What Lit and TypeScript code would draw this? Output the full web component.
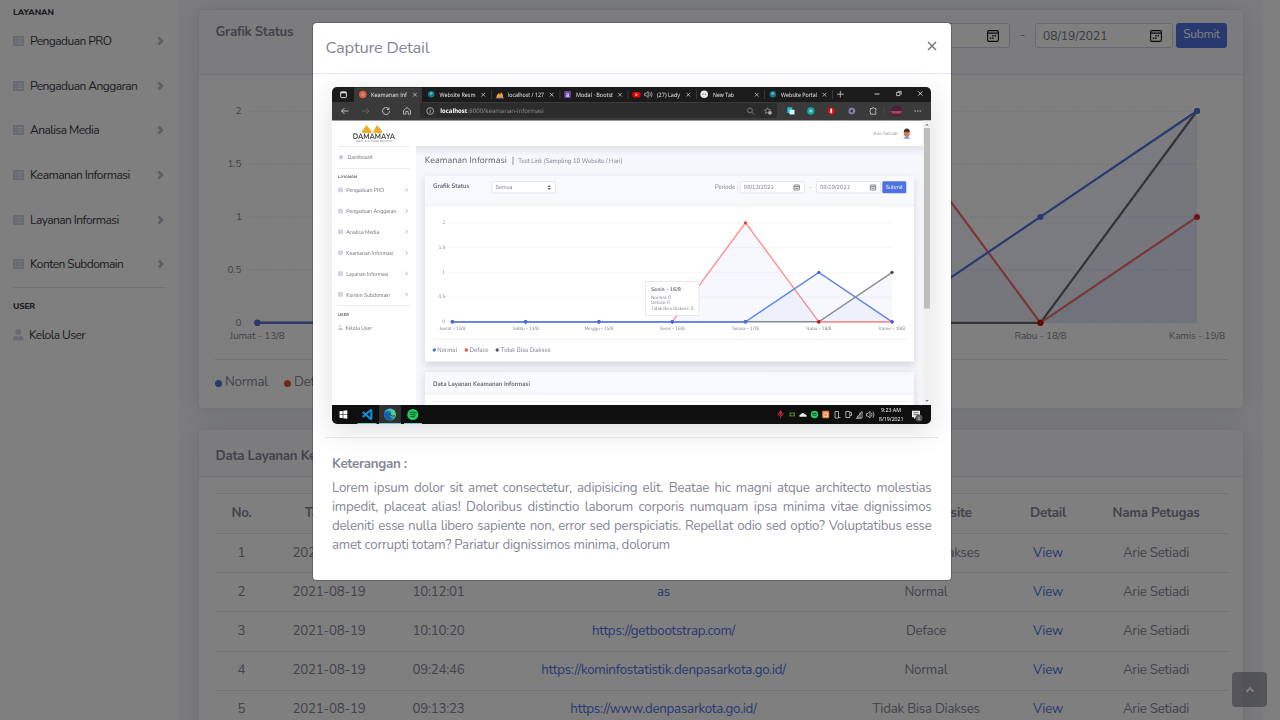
import { LitElement, html, svg, css } from "lit";
import { customElement } from "lit/decorators.js";

const listIcon = html`<svg width="11" height="10" viewBox="0 0 11 10">
  <rect x="0" y="0" width="11" height="10" rx="1" fill="#d1d3e2" />
  <path d="M2 2.500h1.200M2 5h1.200M2 7.500h1.200M4.200 2.500h5M4.200 5h5M4.200 7.500h5" stroke="#fff" stroke-width=".9" opacity=".8" />
</svg>`;

const chevron = html`<svg width="8" height="10" viewBox="0 0 8 10">
  <path d="M1.500 1.500L5 5L1.500 8.500" fill="none" stroke="#b7b9cc" stroke-width="2.500" />
</svg>`;

const calendar = html`<svg width="12" height="12" viewBox="0 0 12 12">
  <rect x="0.600" y="0.600" width="10.800" height="10.800" rx="1.400" fill="none" stroke="#111" stroke-width="1.100" />
  <path d="M0.600 3.100h10.800" stroke="#111" stroke-width="1.100" />
  <path d="M5.200 5.800h1.400M7.600 5.800h1.400M2.800 8.200h1.400M5.200 8.200h1.400" stroke="#111" stroke-width="1.400" />
</svg>`;

@customElement("side-nav")
class SideNav extends LitElement {
  static styles = css`
    :host { display: flex; flex-direction: column; width: 179px; flex: none; background: #fff; padding: 5px 14px 0 13px; box-sizing: border-box; }
    .head { font-size: 8.6px; line-height: 14px; height: 14px; font-weight: 800; color: #3a3b45; }
    .layanan { letter-spacing: -0.1px; }
    .items { display: grid; grid-auto-rows: 44.6px; padding-bottom: 0.6px; }
    .item { display: flex; align-items: center; font-size: 12px; color: #3a3b45; letter-spacing: -0.56px; }
    .item span { flex: 1; padding-left: 6px; }
    .user span { padding-left: 5px; }
    hr { border: 0; border-top: 1px solid #e3e6f0; margin: 0 0 11px; width: 153px; }
    .item svg { display: block; }
    .user { height: 44px; }
  `;
  render() {
    return html`<div class="head layanan">LAYANAN</div>
      <div class="items">
        ${["Pengaduan PRO", "Pengaduan Anggaran", "Analisa Media", "Keamanan Informasi", "Layanan Informasi", "Konten Subdomain"].map(
          (t) => html`<div class="item">${listIcon}<span>${t}</span>${chevron}</div>`
        )}
      </div>
      <hr />
      <div class="head">USER</div>
      <div class="item user">
        <svg width="11" height="12" viewBox="0 0 11 12"><circle cx="5.200" cy="3" r="3" fill="#d1d3e2" /><path d="M0 11.500V9.600C0 7.500 1.200 6.800 3 6.700L5.200 8L7.400 6.700C9.200 6.800 10.400 7.500 10.400 9.600V11.500Z" fill="#d1d3e2" /><path d="M5.200 7.200v4" stroke="#fff" stroke-width=".8" opacity=".6" /></svg>
        <span>Kelola User</span>
      </div>`;
  }
}

@customElement("status-chart")
class StatusChart extends LitElement {
  static styles = css`
    :host { display: block; height: 284px; }
    svg { display: block; }
    text { font: 10px Nunito, Lato, sans-serif; fill: #858796; letter-spacing: 0; }
  `;
  render() {
    const x = (i: number) => 257.3 + i * 156.62;
    const y = (v: number) => 322.8 - v * 105.9;
    const series = [
      { c: "#666", dot: "#5a5c69", v: [0, 0, 0, 0, 0, 0, 2] },
      { c: "#ff6b6b", dot: "#e32525", v: [0, 0, 0, 0, 2, 0, 1] },
      { c: "#4e73df", dot: "#4e73df", v: [0, 0, 0, 0, 0, 1, 2] },
    ];
    const labels: [number, string, number][] = [[0, "Jumat - 13/8", 55], [5, "Rabu - 18/8", 52], [6, "Kamis - 19/8", 56]];
    const ticks: [number, number][] = [[2, 6], [1.5, 14], [1, 5.5], [0.5, 14], [0, 6]];
    return html`<svg width="1044" height="284" viewBox="199 75 1044 284">
      ${ticks.map(
        ([v, w]) => svg`<line x1="249" x2="1197" y1=${y(v) + 0.2} y2=${y(v) + 0.2} stroke="#e3e6f0" stroke-width="1" stroke-dasharray="2 1.500"/>
        <text x=${241.5 - w} y=${y(v) + 2.7} textLength=${w}>${v}</text>`
      )}
      ${series.map((s) => {
        const pts = s.v.map((v, i) => `${x(i)},${y(v)}`).join(" ");
        return svg`<polygon points="${x(0)},${y(0)} ${pts} ${x(6)},${y(0)}" fill="#4e73df" fill-opacity=".06"/>
          <polyline points=${pts} fill="none" stroke=${s.c} stroke-width="2.200"/>
          ${s.v.map((v, i) => svg`<circle cx=${x(i)} cy=${y(v)} r="3" fill=${s.dot}/>`)}`;
      })}
      <circle cx=${x(5)} cy=${y(0)} r="3" fill="#c81111" />
      ${labels.map(([i, t, w]) => svg`<text x=${x(i) - w / 2} y="339" textLength=${w}>${t}</text>`)}
    </svg>`;
  }
}

@customElement("site-table")
class SiteTable extends LitElement {
  static styles = css`
    :host { display: block; padding: 16px 16px 0; font-size: 13.33px; letter-spacing: -0.245px; }
    .row { display: grid; grid-template-columns: 53px 122px 97px 353px 172px 72px 144px; height: 39.2px; padding-bottom: 0.8px; box-sizing: border-box; border-top: 1px solid #e3e6f0; align-items: center; text-align: center; width: 1013px; }
    .th { height: 40px; font-weight: 700; padding-bottom: 1.5px; }
    .link { color: #4e73df; }
  `;
  render() {
    const rows = [
      ["1", "2021-08-19", "", "", "Tidak Bisa Diakses"],
      ["2", "2021-08-19", "10:12:01", "as", "Normal"],
      ["3", "2021-08-19", "10:10:20", "https://getbootstrap.com/", "Deface"],
      ["4", "2021-08-19", "09:24:46", "https://kominfostatistik.denpasarkota.go.id/", "Normal"],
      ["5", "2021-08-19", "09:13:23", "https://www.denpasarkota.go.id/", "Tidak Bisa Diakses"],
    ];
    return html`<div class="row th">
        ${["No.", "Tanggal", "", "", "Status Website", "Detail", "Nama Petugas"].map((t) => html`<span>${t}</span>`)}
      </div>
      ${rows.map(
        (r) => html`<div class="row">
          ${r.map((t, i) => html`<span class=${i === 3 ? "link" : ""}>${t}</span>`)}
          <span class="link">View</span><span>Arie Setiadi</span>
        </div>`
      )}`;
  }
}

@customElement("capture-shot")
class CaptureShot extends LitElement {
  static styles = css`
    :host { display: block; height: 337px; border-radius: 5px; overflow: hidden; box-shadow: 0 7px 28px rgba(58, 59, 69, 0.16); letter-spacing: 0; }
    svg { display: block; }
    .soft { filter: blur(0.3px); }
    text { font-family: Nunito, Lato, sans-serif; fill: #858796; text-rendering: geometricPrecision; }
    .ui { font-family: "Open Sans", sans-serif; }
  `;
  t(x: number, y: number, w: number, size: number, s: string, fill = "#7b7d8c", weight = 400, cls = "") {
    return svg`<text class=${cls} x=${x} y=${y} textLength=${w} lengthAdjust="spacingAndGlyphs" font-size=${size} font-weight=${weight} style="fill:${fill}">${s}</text>`;
  }
  render() {
    const t = this.t;
    const x = (i: number) => 452.4 + i * 73.28;
    const y = (v: number) => 321.8 - v * 49.5;
    const tabs: [number, number, string, number][] = [
      [371, 36, "Keamanan Inf", 415], [439.5, 36, "Website Resm", 483.3], [508, 36, "localhost / 127", 551.7],
      [576, 37, "Modal · Bootst", 620], [657, 23, "(27) Lady", 688.3], [713, 21, "New Tab", 756.7], [781, 36, "Website Portal", 824.5],
    ];
    const series = [
      { c: "#8c8c8c", d: "#444", v: [0, 0, 0, 0, 0, 0, 1] },
      { c: "#ff9090", d: "#f0383c", v: [0, 0, 0, 0, 2, 0, 0] },
      { c: "#6583e4", d: "#4468dc", v: [0, 0, 0, 0, 0, 1, 0] },
    ];
    const menu: [string, number, number][] = [
      ["Pengaduan PRO", 192, 38], ["Pengaduan Anggaran", 213.2, 50], ["Analisa Media", 233.8, 33],
      ["Keamanan Informasi", 254.8, 47], ["Layanan Informasi", 275.7, 42], ["Konten Subdomain", 296.5, 44],
    ];
    const axis: [string, number][] = [["Jumat - 13/8", 26], ["Sabtu - 14/8", 26], ["Minggu - 15/8", 29], ["Senin - 16/8", 25], ["Selasa - 17/8", 27], ["Rabu - 18/8", 25], ["Kamis - 19/8", 26]];
    return html`<svg width="599" height="337" viewBox="332 87 599 337">
      <defs>
        <linearGradient id="top" x1="0" y1="0" x2="0" y2="1"><stop offset="0" stop-color="#e3e4ea" /><stop offset="1" stop-color="#f7f8fc" /></linearGradient>
        <linearGradient id="edge"><stop offset="0" stop-color="#2f9df0" /><stop offset="1" stop-color="#52d97b" /></linearGradient>
        <filter id="shade" x="-10%" y="-10%" width="120%" height="130%"><feGaussianBlur stdDeviation="4" /></filter>
      </defs>
      <rect x="332" y="87" width="599" height="337" fill="#fff" />
      <rect x="416" y="146" width="507" height="260" fill="#f6f7fb" />
      <rect x="416" y="146" width="507" height="10" fill="url(#top)" />
      <rect x="425" y="179" width="489" height="187" fill="#777a88" opacity=".25" filter="url(#shade)" />
      <rect x="425" y="374" width="489" height="40" fill="#777a88" opacity=".25" filter="url(#shade)" />
      <rect x="332" y="87" width="599" height="17" fill="#1b1b1b" />
      <rect x="332" y="405" width="599" height="19" fill="#0f0f0f" />

      <g class="soft">
      <rect x="354" y="87.500" width="68" height="17" fill="#3a3a3a" />
      <rect x="330" y="102" width="603" height="18.500" fill="#3a3a3a" />
      <rect x="420" y="103" width="357" height="15" rx="2" fill="#2c2c2c" />
      <rect x="340.700" y="92" width="5.600" height="5.600" rx=".8" fill="none" stroke="#ddd" /><path d="M340.500 92.500h6" stroke="#ddd" stroke-width="1.600" />
      ${tabs.map(([tx, w, s, cx]) => svg`${t(tx, 96.7, w, 6, s, "#eee", 400, "ui")}<path d="M${cx - 1.8} 92.900l3.600 3.600m0-3.600l-3.600 3.600" stroke="#c8c8c8" stroke-width=".8"/>`)}
      ${[491.5, 560, 628, 696.5, 764.5, 832.5].map((v) => svg`<path d="M${v} 90v9" stroke="#444" stroke-width=".7"/>`)}
      <circle cx="362.800" cy="94.500" r="3.700" fill="#e75a4b" /><circle cx="362.800" cy="94.500" r="1.600" fill="#a9a366" />
      <circle cx="431.200" cy="94.300" r="3.200" fill="#18788a" /><circle cx="431.200" cy="93.600" r="1.400" fill="#4fc0c4" />
      <path d="M496 98l1-3 2-2 1 2 1-3 2 3v3z" fill="#f0a030" /><path d="M496 98h8" stroke="#6c78b0" stroke-width="1" />
      <rect x="564.300" y="91" width="6.600" height="7" rx="1" fill="#6b4aa5" />${t(566.2, 96.6, 3, 5, "B", "#fff", 700)}
      <rect x="632.500" y="92" width="8" height="5.400" rx="1.400" fill="#e00" /><path d="M635.600 93.300v2.800l2.300-1.400z" fill="#fff" />
      <path d="M644.700 93.300h1.500l2-1.800v6l-2-1.800h-1.500zM649.700 92.800q1.200 1.700 0 3.400M651.200 91.800q1.800 2.600 0 5.400" fill="none" stroke="#ccc" stroke-width=".7" />
      <circle cx="704.200" cy="94.300" r="3.800" fill="#eee" /><circle cx="703" cy="94.300" r=".7" fill="#777" /><circle cx="705.400" cy="94.300" r=".7" fill="#777" />
      <circle cx="772.800" cy="94.300" r="3.200" fill="#18788a" /><circle cx="772.800" cy="93.600" r="1.400" fill="#4fc0c4" />
      <path d="M840.300 90.800v6.800M837 94.200h6.800" stroke="#ccc" stroke-width=".8" />
      <path d="M874.500 94h5M918.200 91.400l4.200 4.200m0-4.200l-4.200 4.200" stroke="#ddd" stroke-width=".9" /><path d="M896.700 92.400h3.200v3.200h-3.200zM897.800 91.300h3.400v3.400" fill="none" stroke="#ddd" stroke-width=".8" />
      <path d="M348.500 111h-7m3-3l-3 3l3 3" fill="none" stroke="#ccc" stroke-width=".9" />
      <path d="M362 111h7m-3-3l3 3l-3 3" fill="none" stroke="#696969" stroke-width=".9" />
      <path d="M388.500 108.600A3.500 3.500 0 1 0 389.500 111M389 107.500v2h-2" fill="none" stroke="#ccc" stroke-width=".9" />
      <path d="M403.500 110.500l3.500-3l3.500 3v3.700h-2.300v-2.700h-2.400v2.700h-2.300z" fill="none" stroke="#ccc" stroke-width=".8" />
      <circle cx="430.200" cy="111" r="3.400" fill="none" stroke="#bbb" stroke-width=".8" /><path d="M430.200 110.300v2.600M430.200 108.800v.8" stroke="#bbb" stroke-width=".8" />
      ${t(440.3, 113.2, 27, 6.2, "localhost", "#fff", 700, "ui")}${t(467.7, 113.2, 76, 6.2, ":8000/keamanan-informasi", "#929292", 400, "ui")}
      <circle cx="750" cy="110.400" r="2.400" fill="none" stroke="#777" /><path d="M752 112.400l2.300 2.200" stroke="#777" />
      <path d="M764.500 109.800h2l1-2 1 2h2.200l-1.600 1.500.4 2.200-2-1-2 1 .4-2.300z" fill="none" stroke="#999" stroke-width=".8" /><circle cx="770" cy="112.800" r="1.900" fill="#aaa" />
      <rect x="787.300" y="107.400" width="5" height="5.600" fill="#1cc3dc" /><rect x="789.500" y="109.800" width="5" height="4.600" fill="#d8f7fb" />
      <circle cx="810.800" cy="111" r="3.700" fill="#13a9a5" /><circle cx="810.800" cy="111" r="1.500" fill="#7ddbd6" />
      <circle cx="831.200" cy="111" r="3.600" fill="#e00a0a" /><path d="M831.200 108.700v4.400" stroke="#fff" stroke-width="1.800" />
      <circle cx="851.800" cy="111" r="2.400" fill="none" stroke="#9290cf" stroke-width="2" stroke-dasharray="1.300 .3" />
      <path d="M870.500 108.500h1.800a1 1 0 0 1 2 0h1.600v2a1 1 0 0 0 0 1.800v1.900h-5.400v-1.900a1 1 0 0 1 0-1.900z" fill="none" stroke="#ccc" stroke-width=".8" />
      <path d="M884 107v8" stroke="#555" stroke-width=".7" />
      <circle cx="896.500" cy="111" r="5.500" fill="#462139" /><path d="M891 111h11q-.5 2-2 2.800h-7q-1.500-.8-2-2.800" fill="#b83d63" />
      <path d="M914.500 111h1.400m1.200 0h1.400m1.200 0h1.400" stroke="#ccc" stroke-width="1" />

      <path d="M362 131l4.500-6 5 6v2h-9zM373.500 131l3.500-6 5 6v2h-8.500z" fill="#f3ac28" />
      ${t(352.7, 138.5, 42.5, 8, "DAMAMAYA", "#45464b", 700)}${t(356, 142.2, 36, 2.4, "DENPASAR CYBER MONITOR", "#777")}
      <path d="M338 146.500h72M338 168.500h72M338 305.500h72" stroke="#e8e9ef" stroke-width=".8" />
      <path d="M338.500 157l2.600-2.400 2.600 2.400h-.8v2.300h-3.600v-2.300z" fill="#c9ccdf" />
      ${t(347.5, 159.2, 25, 5.8, "Dashboard", "#6c6d7a")}
      ${t(338, 178.2, 19, 3.9, "LAYANAN", "#4c4d58", 700)}
      ${menu.map(([s, my, w]) => svg`<rect x="338" y=${my - 4.4} width="5" height="4.600" fill="#d1d4e6"/>${t(346.3, my, w, 5.8, s, "#6c6d78")}<path d="M405.600 ${my - 3.8}l2 1.700-2 1.700" fill="none" stroke="#b0b3c8" stroke-width="1"/>`)}
      ${t(338, 315.5, 11, 3.9, "USER", "#4c4d58", 700)}
      <circle cx="340.400" cy="326.200" r="1.300" fill="#d1d4e6" /><path d="M338 330q0-2.300 2.400-2.300t2.400 2.300z" fill="#c5c9e0" />
      ${t(345.5, 329.5, 26.5, 5.8, "Kelola User", "#6c6d78")}
      ${t(873, 135.1, 24.5, 4.8, "Arie Setiadi", "#8d8f9d")}
      <circle cx="906.800" cy="133.500" r="4.800" fill="#eee" /><ellipse cx="906.800" cy="133" rx="2.900" ry="4" fill="#ca7a56" /><path d="M903.900 132q0-3.500 2.900-3.500t2.900 3.500z" fill="#48302b" /><path d="M903 138.500q3.800-3 7.600 0z" fill="#4e73df" />
      ${t(424.8, 163.2, 82, 9, "Keamanan Informasi", "#62646f")}<path d="M513 156.800v8" stroke="#858796" stroke-width=".9" />${t(518.3, 163.2, 104, 6.7, "Test Link (Sampling 10 Website / Hari)")}

      <rect x="425" y="176" width="489" height="185.500" fill="#fff" />
      <rect x="425" y="176" width="489" height="29.500" fill="#f8f9fc" /><path d="M425 205.700h489M433 339.200h473" stroke="#e3e5ee" stroke-width=".7" />
      ${t(433, 187.6, 36.5, 6.6, "Grafik Status", "#686a77", 700)}
      <rect x="492" y="181.500" width="63.500" height="11.500" rx="1.500" fill="#fff" stroke="#d9dbe5" stroke-width=".7" />
      ${t(495.5, 189.3, 17, 5.8, "Semua")}<path d="M547.700 187l1.500-2 1.500 2zM547.700 188l1.500 2 1.500-2z" fill="#555" />
      ${t(715, 189, 23, 6.6, "Periode :")}
      <rect x="740" y="181.500" width="64.500" height="11.500" rx="1.500" fill="#fff" stroke="#d9dbe5" stroke-width=".7" />${t(743.8, 189.3, 30, 5.8, "08/13/2021")}
      <rect x="816.500" y="181.500" width="64" height="11.500" rx="1.500" fill="#fff" stroke="#d9dbe5" stroke-width=".7" />${t(820, 189.3, 30, 5.8, "08/19/2021")}
      ${[794, 870.3].map((v) => svg`<rect x=${v} y="185" width="5.400" height="5" rx=".6" fill="none" stroke="#666" stroke-width=".8"/><path d="M${v} 186.600h5.400M${v + 1} 188.300h3.400" stroke="#666" stroke-width=".8"/>`)}
      ${t(809, 189, 2.5, 6, "-")}
      <rect x="882.300" y="181.300" width="24" height="12" rx="1.500" fill="#4e73df" />${t(885.8, 189, 17, 5.8, "Submit", "#fff")}

      ${[2, 1.5, 1, 0.5, 0].map((v) => svg`<path d="M448 ${y(v)}H892" stroke="#eef0f5" stroke-width=".6"/>${t(v % 1 ? 438.5 : 442.3, y(v) + 1.3, v % 1 ? 6.8 : 2.8, 5, String(v))}`)}
      ${series.map((s) => {
        const p = s.v.map((v, i) => `${x(i)},${y(v)}`).join(" ");
        return svg`<polygon points="${p} ${x(6)},${y(0)}" fill="#4e73df" fill-opacity=".05"/><polyline points=${p} fill="none" stroke=${s.c} stroke-width="1.400"/>${s.v.map((v, i) => svg`<circle cx=${x(i)} cy=${y(v)} r="1.600" fill=${s.d}/>`)}`;
      })}
      <path d="M452 321.800H745" stroke="#6583e4" stroke-width="1.800" /><path d="M819 321.800H892" stroke="#ff9090" stroke-width="1.200" />
      ${[0, 1, 2, 3, 4].map((i) => svg`<circle cx=${x(i)} cy="321.800" r="1.700" fill="#4468dc"/>`)}
      <circle cx="818.800" cy="321.800" r="1.600" fill="#c81111" /><circle cx="892" cy="321.800" r="1.600" fill="#4468dc" />
      ${axis.map(([s, w], i) => t(x(i) - w / 2, 329.5, w, 4.8, s))}
      <rect x="645.500" y="281.500" width="53.500" height="34" rx="1" fill="#fff" stroke="#dddfeb" stroke-width=".7" />
      ${t(651, 290.7, 30, 5.3, "Senin - 16/8", "#6e707e", 700)}${t(651, 299, 20, 4.8, "Normal: 0")}${t(651, 304.2, 19, 4.8, "Deface: 0")}${t(651, 309.5, 42.5, 4.8, "Tidak Bisa Diakses: 0")}
      <circle cx="434.300" cy="350" r="1.700" fill="#4e73df" />${t(437.3, 351.6, 20, 6.6, "Normal")}
      <circle cx="466.300" cy="350" r="1.700" fill="#f0503f" />${t(469.5, 351.6, 19, 6.6, "Deface")}
      <circle cx="497.200" cy="350" r="1.700" fill="#5a5c69" />${t(500.5, 351.6, 50, 6.6, "Tidak Bisa Diakses")}
      <rect x="425" y="372" width="489" height="33" fill="#fff" /><rect x="425" y="372" width="489" height="21.500" fill="#f8f9fc" />
      <path d="M425 393.700h489M433 401.500h473" stroke="#e3e5ee" stroke-width=".7" />
      ${t(433, 386, 97, 6.6, "Data Layanan Keamanan Informasi", "#686a77", 700)}
      <rect x="923" y="120.500" width="10" height="284.500" fill="#f1f1f1" /><rect x="924" y="128" width="6" height="180.500" fill="#bebebe" />
      <path d="M925.300 125.500l1.700-1.800 1.700 1.800zM925.300 400l1.700 1.800 1.700-1.800z" fill="#777" />

      <rect x="379" y="405" width="22" height="19" fill="#303030" />
      <path d="M339.500 411.300l3.200-.4v3.300h-3.200zM343.300 410.800l4-.5v3.900h-4zM339.500 414.800h3.200v3.400l-3.200-.4zM343.300 414.800h4v4l-4-.5z" fill="#fff" />
      <path d="M371.300 409.200v10.600M371.200 409.600l-8.500 7.400M371.200 419.400l-8.500-7.400" fill="none" stroke="#1688d4" stroke-width="2.200" />
      <circle cx="390" cy="414.500" r="6" fill="url(#edge)" /><path d="M384 414q2-4 6-2.500 2 1-.5 4 1 3.500 5 2-5 5-9 .5-1.800-2-1.500-4" fill="#0f5fad" /><path d="M390.500 413.500q-1.500 3 4.500 2.500" fill="none" stroke="#303030" stroke-width="1" />
      <circle cx="412.800" cy="414.500" r="5.500" fill="#1ed05d" /><path d="M409.500 412.500q3.500-1 7 .6M410 414.700q3-.8 5.700.5M410.300 416.700q2.500-.6 4.600.4" fill="none" stroke="#10331d" stroke-width=".9" />
      <path d="M357.500 423.500h19M379 423.500h22M404 423.500h18" stroke="#76c9d2" stroke-width="1" />
      <rect x="779.400" y="410.500" width="2.400" height="4.500" rx="1.200" fill="#d3273e" /><path d="M778 413q0 3 2.600 3t2.600-3M780.600 416v2.500" stroke="#d3273e" stroke-width=".9" fill="none" />
      <path d="M789.500 412.500h5.500v4h-5.500z" fill="#477d27" /><path d="M790.500 414.500q2-2 3.500 0-1.500 2-3.500 0" fill="#111" /><path d="M799.500 416.700q-.5-2.500 1.600-2.500 1.500-2.500 3.500 0 2.500.2 2 2.500z" fill="#eee" />
      <circle cx="814.500" cy="414.500" r="3.700" fill="#1ed05d" /><path d="M812.300 413.500q2.500-.7 4.500.4M812.700 415.200q2-.5 3.600.4" fill="none" stroke="#0f0f0f" stroke-width=".7" />
      <rect x="822.200" y="410.800" width="7" height="7.400" rx="1" fill="#f27c2c" /><path d="M824 413h3.400v3.400h-3.400z" fill="none" stroke="#fff" stroke-width=".8" />
      <path d="M835 411.500h3.500v6.500H835zM839 417.500h1.500M845.800 411.500h4v6h-4zM850 412.500h1.500v3h-1.500M856.300 418.500l5.700-7v6.500zM857 416l2.500 2M860 412.500v5.500M866.500 413.500h1.500l2-2v6.500l-2-2h-1.500zM871.500 413q1 1.700 0 3.400M873 411.700q2 3 0 6" fill="none" stroke="#ccc" stroke-width=".8" />
      ${t(881, 412.4, 20, 5.7, "9:23 AM", "#fff", 400, "ui")}${t(879, 420.7, 24.5, 5.7, "8/19/2021", "#fff", 400, "ui")}
      <path d="M912 410.700h8v6.500h-4l-2 1.800v-1.800h-2z" fill="#eee" /><path d="M913.500 412.700h5m-5 2h5" stroke="#333" stroke-width=".7" />
      <circle cx="919" cy="418" r="3.500" fill="#555" />${t(917.5, 419.8, 3, 4.6, "11", "#fff")}
      </g>
    </svg>`;
  }
}

@customElement("app-root")
class AppRoot extends LitElement {
  static styles = css`
    :host { display: block; position: relative; width: 1280px; height: 720px; overflow: hidden; background: #fff; font-family: Nunito, Lato, sans-serif; color: #858796; font-size: 13.33px; letter-spacing: -0.245px; }
    .page { display: flex; height: 720px; width: 1263px; overflow: hidden; }
    .content { flex: 1; background: #f8f9fc; padding: 9px 19px 0 19px; display: flex; flex-direction: column; gap: 20px; min-width: 0; overflow: hidden; }
    .card { flex: none; background: #fff; border: 1px solid #e3e6f0; border-radius: 4.5px; box-shadow: 0 2px 23px rgba(58, 59, 69, 0.15); box-sizing: border-box; overflow: hidden; }
    .chart { height: 400px; }
    .data { height: 420px; }
    .cardhead { background: #f8f9fc; border-bottom: 1px solid #e3e6f0; box-sizing: border-box; padding: 0 16px 0 16.5px; display: flex; }
    .chart .cardhead { height: 65px; padding-top: 13px; }
    .data .cardhead { height: 47px; align-items: center; padding-top: 5px; }
    .h { font-weight: 700; line-height: 18px; flex: 1; letter-spacing: -0.28px; }
    .range { display: flex; align-items: flex-start; }
    .date { display: flex; align-items: center; justify-content: space-between; width: 138px; height: 25px; box-sizing: border-box; border: 1px solid #d1d3e2; border-radius: 3px; background: #fff; padding: 0 10px 0 7px; font-size: 12px; line-height: 22px; letter-spacing: 0; color: #6e707e; }
    .dash { width: 25px; text-align: center; line-height: 24px; }
    .submit { margin-left: 3px; width: 51px; height: 25px; line-height: 22px; border-radius: 3px; background: #4e73df; color: #fff; text-align: center; font-size: 12px; letter-spacing: -0.3px; }
    .legend { border-top: 1px solid #dcdee6; margin: 0 16px; padding-top: 12px; display: flex; gap: 16px; }
    .legend span { display: flex; align-items: center; gap: 3px; line-height: 20px; }
    .dot { width: 7px; height: 7px; border-radius: 50%; margin-top: 2px; }
    .blue { background: #4e73df; }
    .red { background: #e74a3b; }
    .totop { position: absolute; left: 1232px; top: 672px; width: 35px; height: 35px; border-radius: 4px; background: rgba(90, 92, 105, 0.5); display: flex; align-items: center; justify-content: center; }
    .backdrop { position: absolute; inset: 0; background: rgba(0, 0, 0, 0.5); }
    .modal { position: absolute; left: 312px; top: 22px; width: 640px; height: 559px; box-sizing: border-box; background: #fff; background-clip: padding-box; border: 1px solid rgba(0, 0, 0, 0.2); border-radius: 4.5px; overflow: hidden; display: flex; flex-direction: column; }
    .modalhead { height: 51px; box-sizing: border-box; border-bottom: 1px solid #e3e6f0; display: flex; justify-content: space-between; align-items: center; padding: 0 14px 1px 12.5px; font-size: 16.5px; flex: none; }
    .modalhead svg { margin-top: -4px; }
    .modalbody { padding: 13px 13px 0 12px; flex: 1; }
    .shot { padding: 0 7px 0 7px; }
    .modalbody hr { border: 0; border-top: 1px solid #e3e3e5; margin: 13px 0 17px; }
    .caption { padding: 0 6.5px 0 7px; }
    .bold { font-weight: 700; line-height: 19px; margin-bottom: 5px; letter-spacing: -0.3px; }
    .line { display: block; line-height: 19px; text-align: justify; text-align-last: justify; white-space: nowrap; }
    .tight { letter-spacing: -0.27px; }
    .last { text-align-last: left; }
  `;
  render() {
    return html`<div class="page">
        <side-nav></side-nav>
        <div class="content">
          <div class="card chart">
            <div class="cardhead">
              <div class="h">Grafik Status</div>
              <div class="range">
                <div class="date"><span></span>${calendar}</div>
                <div class="dash">-</div>
                <div class="date">08/19/2021${calendar}</div>
                <div class="submit">Submit</div>
              </div>
            </div>
            <status-chart></status-chart>
            <div class="legend">
              <span><i class="dot blue"></i>Normal</span><span><i class="dot red"></i>Deface</span>
            </div>
          </div>
          <div class="card data">
            <div class="cardhead"><div class="h">Data Layanan Keamanan</div></div>
            <site-table></site-table>
          </div>
        </div>
      </div>
      <div class="totop"><svg width="10" height="8" viewBox="0 0 10 8"><path d="M1.500 5.700L5 2.300L8.500 5.700" fill="none" stroke="#fff" stroke-width="2.200" /></svg></div>
      <div class="backdrop"></div>
      <div class="modal">
        <div class="modalhead">
          <span>Capture Detail</span>
          <svg width="10" height="10" viewBox="0 0 10 10"><path d="M1 1l8 8m0-8l-8 8" stroke="#7a7a7a" stroke-width="1.500" /></svg>
        </div>
        <div class="modalbody">
          <div class="shot"><capture-shot></capture-shot></div>
          <hr />
          <div class="caption">
            <div class="bold">Keterangan :</div>
            <span class="line">Lorem ipsum dolor sit amet consectetur, adipisicing elit. Beatae hic magni atque architecto molestias</span>
            <span class="line">impedit, placeat alias! Doloribus distinctio laborum corporis numquam ipsa minima vitae dignissimos</span>
            <span class="line tight">deleniti esse nulla libero sapiente non, error sed perspiciatis. Repellat odio sed optio? Voluptatibus esse</span>
            <span class="line last">amet corrupti totam? Pariatur dignissimos minima, dolorum</span>
          </div>
        </div>
      </div>`;
  }
}
